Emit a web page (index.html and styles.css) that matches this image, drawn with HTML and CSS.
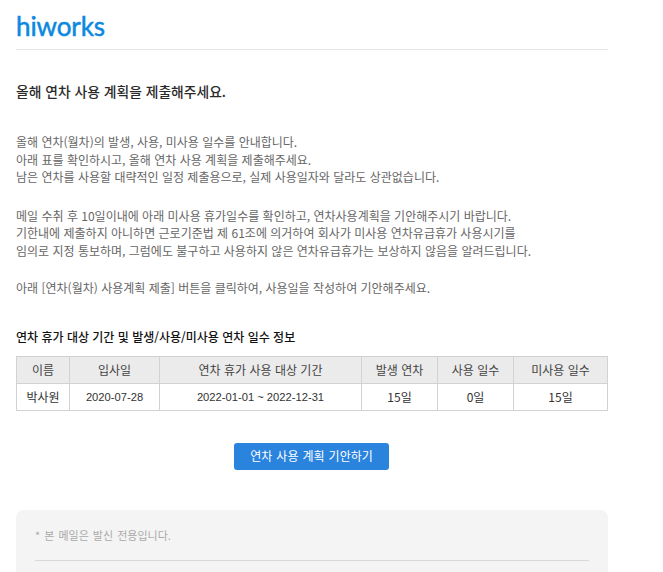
FILE: index.html
```html
<!DOCTYPE html>
<html lang="ko">
<head>
<meta charset="utf-8">
<title>hiworks</title>
<link rel="stylesheet" href="styles.css">
</head>
<body>
<div class="mail">
  <header class="head"><span class="logo">hiworks</span></header>
  <h1 class="title">올해 연차 사용 계획을 제출해주세요.</h1>
  <p class="para first">올해 연차(월차)의 발생, 사용, 미사용 일수를 안내합니다.<br>아래 표를 확인하시고, 올해 연차 사용 계획을 제출해주세요.<br>남은 연차를 사용할 대략적인 일정 제출용으로, 실제 사용일자와 달라도 상관없습니다.</p>
  <p class="para second">메일 수취 후 10일이내에 아래 미사용 휴가일수를 확인하고, 연차사용계획을 기안해주시기 바랍니다.<br>기한내에 제출하지 아니하면 근로기준법 제 61조에 의거하여 회사가 미사용 연차유급휴가 사용시기를<br>임의로 지정 통보하며, 그럼에도 불구하고 사용하지 않은 연차유급휴가는 보상하지 않음을 알려드립니다.</p>
  <p class="para">아래 [연차(월차) 사용계획 제출] 버튼을 클릭하여, 사용일을 작성하여 기안해주세요.</p>
  <h2 class="subtitle">연차 휴가 대상 기간 및 발생/사용/미사용 연차 일수 정보</h2>
  <table class="info">
    <colgroup>
      <col class="c1"><col class="c2"><col class="c3"><col class="c4"><col class="c5"><col class="c6">
    </colgroup>
    <thead>
      <tr><th>이름</th><th>입사일</th><th>연차 휴가 사용 대상 기간</th><th>발생 연차</th><th>사용 일수</th><th>미사용 일수</th></tr>
    </thead>
    <tbody>
      <tr><td>박사원</td><td class="num">2020-07-28</td><td class="num">2022-01-01 ~ 2022-12-31</td><td>15일</td><td>0일</td><td>15일</td></tr>
    </tbody>
  </table>
  <div class="action"><a class="btn" href="#">연차 사용 계획 기안하기</a></div>
  <footer class="foot">
    <p class="note">* 본 메일은 발신 전용입니다.</p>
    <hr class="rule">
  </footer>
</div>
</body>
</html>
```
FILE: styles.css
```css
html, body { margin: 0; padding: 0; background: #fff; }
body { height: 572px; overflow: hidden; }
.mail {
  width: 592px;
  margin-left: 16px;
  font-family: "Noto Sans CJK KR", "Liberation Sans", sans-serif;
  font-size: 12px;
  color: #666;
}
.head { height: 49px; border-bottom: 1px solid #e6e6e6; }
.logo {
  display: block;
  font-family: "Lato", sans-serif;
  font-weight: 400;
  font-size: 26px;
  line-height: 26px;
  padding-top: 13px;
  letter-spacing: -0.1px;
  -webkit-text-stroke: 0.5px #0b88e0;
  color: #0b88e0;
}
.title { margin: 31px 0 0; font-size: 13.8px; line-height: 20px; font-weight: 500; color: #2a2a2a; }
.para { margin: 20px 0 0; line-height: 17.5px; }
.para.first { margin-top: 32px; }
.para.second { margin-top: 21px; }
.subtitle { margin: 32px 0 0; font-size: 12px; line-height: 16px; font-weight: 500; color: #111; }
.info { margin-top: 11px; width: 592px; border-collapse: collapse; table-layout: fixed; }
.c1 { width: 53px; } .c2 { width: 90px; } .c3 { width: 202px; } .c4 { width: 76px; } .c5 { width: 76px; } .c6 { width: 94px; }
.info th, .info td { border: 1px solid #d2d2d2; padding: 0; text-align: center; font-weight: 400; font-size: 12px; color: #444; }
.info th { background: #ebebeb; height: 26px; }
.info td { color: #333; height: 26px; }
.info td.num { font-family: "Liberation Sans", sans-serif; font-size: 11.2px; }
.action { margin-top: 32px; display: flex; justify-content: center; }
.btn { display: block; width: 155px; height: 27px; margin-right: 1px; line-height: 26px; text-align: center; background: #2a84de; color: #fff; border-radius: 3px; text-decoration: none; font-size: 12px; word-spacing: 0.7px; }
.foot { margin-top: 40px; background: #f4f4f4; border-radius: 8px 8px 0 0; padding: 17px 19px 0; height: 100px; }
.note { margin: 0; line-height: 17px; color: #aaa; font-size: 11px; word-spacing: 1px; }
.rule { margin: 16px 0 0; border: 0; border-top: 1px solid #d9d9d9; }
```
